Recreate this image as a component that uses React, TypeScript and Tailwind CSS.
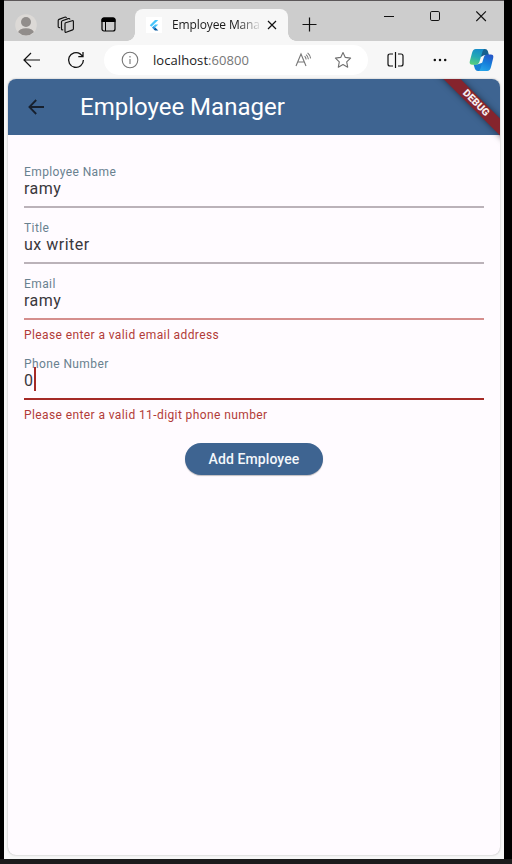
import React from "react";

function ProfileIcon() {
  return (
    <svg width="22" height="22" viewBox="0 0 22 22">
      <defs>
        <clipPath id="avatar"><circle cx="11" cy="11" r="10.5" /></clipPath>
      </defs>
      <circle cx="11" cy="11" r="10.8" fill="#dcd9d6" />
      <g clipPath="url(#avatar)" fill="#918d8b">
        <circle cx="11" cy="8" r="5" />
        <ellipse cx="11" cy="19" rx="8" ry="4.8" />
      </g>
    </svg>
  );
}

function WorkspacesIcon() {
  return (
    <svg width="18" height="18" viewBox="0 0 18 18" fill="none" stroke="#111" strokeWidth="1.15" strokeLinejoin="round" strokeLinecap="round">
      <path d="M8.6 6.8 15.2 4.7Q16.4 4.4 16.4 5.6V12.7Q16.4 13.6 15.6 13.9L9.2 16.3Q8 16.7 8 15.5V7.8Q8 7 8.6 6.8Z" />
      <path d="M5.8 13.8Q4.5 14 4.5 12.9V6Q4.5 5.1 5.3 4.8L11.2 2.6Q12.6 2.2 12.8 3.2" />
      <path d="M2.7 11.6Q1.2 11.7 1.2 10.5V4.6Q1.2 3.7 2 3.4L7.6 1.2Q8.8.8 9.3 1.5" />
    </svg>
  );
}

function TabActionsIcon() {
  return (
    <svg width="15" height="15" viewBox="0 0 15 15">
      <rect x="1" y="1" width="13" height="13" rx="2" fill="none" stroke="#000" strokeWidth="1.2" />
      <path d="M.5 5V2.8Q.5.5 2.8.5h9.4q2.3 0 2.3 2.3V5z" />
      <path d="M4.5 5v9" stroke="#000" />
    </svg>
  );
}

function FlutterIcon() {
  return (
    <svg width="16" height="16" viewBox="0 0 16 16" className="bg-white">
      <path d="M9 3h3.3L5.4 9.8 3.8 8.2z" fill="#47c5fb" />
      <path d="M9 7.5h3.3L9.2 10.6 7.6 9z" fill="#47c5fb" />
      <path d="M6 10.6 7.6 9l1.6 1.6-1.6 1.6z" fill="#2196e8" />
      <path d="m7.6 12.2 1.6-1.6 3.1 3H9z" fill="#00569e" />
    </svg>
  );
}

function CopilotIcon() {
  return (
    <svg width="25" height="24" viewBox="0 0 25 24">
      <defs>
        <linearGradient id="cpLeft" x1=".6" y1="0" x2=".3" y2="1">
          <stop offset="0" stopColor="#168bc9" />
          <stop offset=".5" stopColor="#23a9b5" />
          <stop offset="1" stopColor="#55cf7c" />
        </linearGradient>
        <linearGradient id="cpRight" x1=".7" y1="0" x2=".3" y2="1">
          <stop offset="0" stopColor="#2557c7" />
          <stop offset=".5" stopColor="#167edb" />
          <stop offset="1" stopColor="#25a4e8" />
        </linearGradient>
      </defs>
      <path d="M12 1h4q2.1 0 2.8 2l1.2 4.2h-5L11.8 9z" fill="#17608e" />
      <path d="M13.8 23H9q-2.2 0-3-2l-1.5-4.8H9l4.8-1.8z" fill="#1680d5" />
      <path d="M6.8 1h8.9q-1.6.3-2.2 2.4L10.4 14q-.8 2.7-3.5 2.7H3.2Q0 16.7.8 13.3L3 5Q4 1 6.8 1z" fill="url(#cpLeft)" />
      <path d="M18.2 23H9.3q1.6-.3 2.2-2.4L14.6 10q.8-3.5 3.5-3.5h3.7q3.2 0 2.4 3.4L22 19q-1 4-3.8 4z" fill="url(#cpRight)" />
    </svg>
  );
}

function TabStrip() {
  return (
    <div className="flex h-10 shrink-0 bg-[#cdcdcd]">
      <div className="flex w-[131px] items-start pt-[13px] pl-[11px]">
        <ProfileIcon />
        <div className="mt-[2px] ml-5"><WorkspacesIcon /></div>
        <div className="mt-[3px] ml-[26px]"><TabActionsIcon /></div>
      </div>
      <div className="relative mt-2 flex h-8 w-[153px] items-center rounded-t-lg bg-[#f7f7f7] pl-[11px]">
        <span className="absolute bottom-0 -left-2 size-2 bg-[radial-gradient(circle_at_0_0,#cdcdcd_7.5px,#f7f7f7_8px)]" />
        <span className="absolute -right-2 bottom-0 size-2 bg-[radial-gradient(circle_at_100%_0,#cdcdcd_7.5px,#f7f7f7_8px)]" />
        <FlutterIcon />
        <span className="ml-[10px] w-[88px] font-['Open_Sans',sans-serif] text-[12px] leading-5 tracking-[-0.12px] whitespace-nowrap text-[#1b1b1b] [mask-image:linear-gradient(to_right,black_66px,transparent_90px)]">
          Employee Mana
        </span>
        <svg width="10" height="10" viewBox="0 0 10 10" className="ml-[7px]" stroke="#111" strokeWidth="1.2">
          <path d="m1 1 8 8M9 1 1 9" />
        </svg>
      </div>
      <svg width="15" height="15" viewBox="0 0 15 15" className="mt-4 ml-[14px]" stroke="#111" strokeWidth="1.2">
        <path d="M7.5.5v14M.5 7.5h14" />
      </svg>
      <div className="mt-[10px] ml-auto flex items-start pr-[17px]">
        <svg width="10" height="11" viewBox="0 0 10 11" stroke="#111"><path d="M0 5.5h10" /></svg>
        <svg width="11" height="11" viewBox="0 0 11 11" className="ml-[36px]" fill="none" stroke="#111"><rect x=".5" y=".5" width="9" height="9" rx="1.3" /></svg>
        <svg width="11" height="11" viewBox="0 0 11 11" className="ml-[35px]" stroke="#111" strokeWidth="1.1"><path d="m.3.4 9.6 9.6M9.9.4.3 10" /></svg>
      </div>
    </div>
  );
}

function Toolbar() {
  return (
    <div className="flex h-[38px] shrink-0 items-center bg-[#f7f7f7] pl-[19px]">
      <svg width="18" height="16" viewBox="0 0 18 16" fill="none" stroke="#111" strokeWidth="1.2">
        <path d="M8 1 1 8l7 7M1 8h16" />
      </svg>
      <svg width="18" height="18" viewBox="0 0 18 18" className="ml-[26px]" fill="none" stroke="#111" strokeWidth="1.3">
        <path d="M16.4 9A7.4 7.4 0 1 1 13.2 2.9L15.8 5.2M16 1v4.6h-4.7" />
      </svg>
      <div className="ml-[19px] flex h-[30px] w-[264px] items-center rounded-full bg-white pl-[17px]">
        <svg width="18" height="18" viewBox="0 0 18 18" fill="none" stroke="#767676" strokeWidth="1.1">
          <circle cx="9" cy="9" r="7.8" />
          <path d="M9 8v5M9 5v1.4" />
        </svg>
        <span className="ml-[14px] w-[100px] font-['Open_Sans',sans-serif] text-[13px] leading-5 tracking-[0.07px] whitespace-nowrap text-[#1b1b1b]">
          localhost<span className="text-[#767676]">:60800</span>
        </span>
        <svg width="17" height="17" viewBox="0 0 17 17" className="ml-[42px]" fill="none" stroke="#777" strokeWidth="1.1">
          <path d="m1 14 5-12 5 12M2.8 10h6.4M9.6 4.2q1.4 1 1.5 3.2M11 2.6q2.2 1.6 2.4 4.6M12.6.9q2.6 2.2 3 5.5" />
        </svg>
        <svg width="18" height="18" viewBox="0 0 18 18" className="ml-[22px]" fill="none" stroke="#707070" strokeWidth="1.1" strokeLinejoin="round">
          <path d="m9 1.5 2.3 4.9 5.3.7-3.9 3.7 1 5.4L9 13.6l-4.7 2.6 1-5.4-3.9-3.7 5.3-.7z" />
        </svg>
      </div>
      <svg width="17" height="16" viewBox="0 0 17 16" className="ml-[19px]" fill="none" stroke="#111" strokeWidth="1.2">
        <path d="M6 2H3Q1 2 1 4v8q0 2 2 2h3M8.5 0v16M11 2h3q2 0 2 2v8q0 2-2 2h-3" />
      </svg>
      <svg width="14" height="4" viewBox="0 0 14 4" className="ml-[29px]" fill="#111">
        <circle cx="1.8" cy="2" r="1.25" /><circle cx="7" cy="2" r="1.25" /><circle cx="12.2" cy="2" r="1.25" />
      </svg>
      <div className="ml-[22px]"><CopilotIcon /></div>
    </div>
  );
}

type FieldProps = {
  label: string;
  value: string;
  error?: string;
  focused?: boolean;
};

function Field({ label, value, error, focused }: FieldProps) {
  const line = focused ? "border-[#a52a26]" : error ? "border-[#d58e8d]" : "border-[#bbb2b9]";
  return (
    <div className={error ? "h-20" : "h-14"}>
      <div className={`h-14 border-b-2 pt-3 ${line}`}>
        <div className="text-[12px] leading-4 tracking-[0.4px] text-[#69818f]">{label}</div>
        <div className="flex h-[18px] items-center text-[16px] leading-[18px] tracking-[0.5px] text-[#3a373c]">
          {value}
          {focused && <span className="-mt-[5px] h-6 w-[2px] shrink-0 bg-[#a52a26]" />}
        </div>
      </div>
      {error && <div className="pt-[7px] text-[12px] leading-4 tracking-[0.4px] text-[#b23b38]">{error}</div>}
    </div>
  );
}

export default function App() {
  return (
    <div className="h-[864px] w-[512px] overflow-hidden bg-black font-[Roboto,sans-serif]">
      <div className="h-[859px] pr-2 pl-1">
        <div className="flex h-full flex-col border-t border-[#5c5759] bg-[#f7f7f7]">
          <TabStrip />
          <Toolbar />
          <main className="relative mx-1 h-[776px] overflow-hidden rounded-lg bg-[#fffbff] shadow-[0_0_2px_#aaa]">
            <header className="flex h-14 items-center bg-[#3e6491] pl-5">
              <svg width="16" height="16" viewBox="0 0 16 16" fill="none" stroke="#17202e" strokeWidth="1.8">
                <path d="M8.2 1 1.4 8l6.8 7M1.5 8H16" />
              </svg>
              <h1 className="ml-9 text-[24px] leading-8 text-white">Employee Manager</h1>
            </header>
            <div className="absolute top-[18px] right-[-36px] h-3 w-[120px] rotate-45 bg-[#85242d] text-center text-[10.2px] leading-3 font-black text-[#f6eef0] shadow-[0_0_6px_rgba(0,0,0,0.5)]">
              DEBUG
            </div>
            <form className="flex flex-col px-4 pt-[17px]">
              <Field label="Employee Name" value="ramy" />
              <Field label="Title" value="ux writer" />
              <Field label="Email" value="ramy" error="Please enter a valid email address" />
              <Field label="Phone Number" value="0" error="Please enter a valid 11-digit phone number" focused />
              <button type="button" className="mt-[19px] h-8 w-[138px] self-center rounded-full bg-[#3e6491] text-[14px] leading-5 font-medium tracking-[0.1px] text-[#f4f7fb] shadow-[0_1px_1px_rgba(0,0,0,0.25)]">
                Add Employee
              </button>
            </form>
          </main>
        </div>
      </div>
      <div className="h-[5px] bg-[#1c1c1c]" />
    </div>
  );
}
